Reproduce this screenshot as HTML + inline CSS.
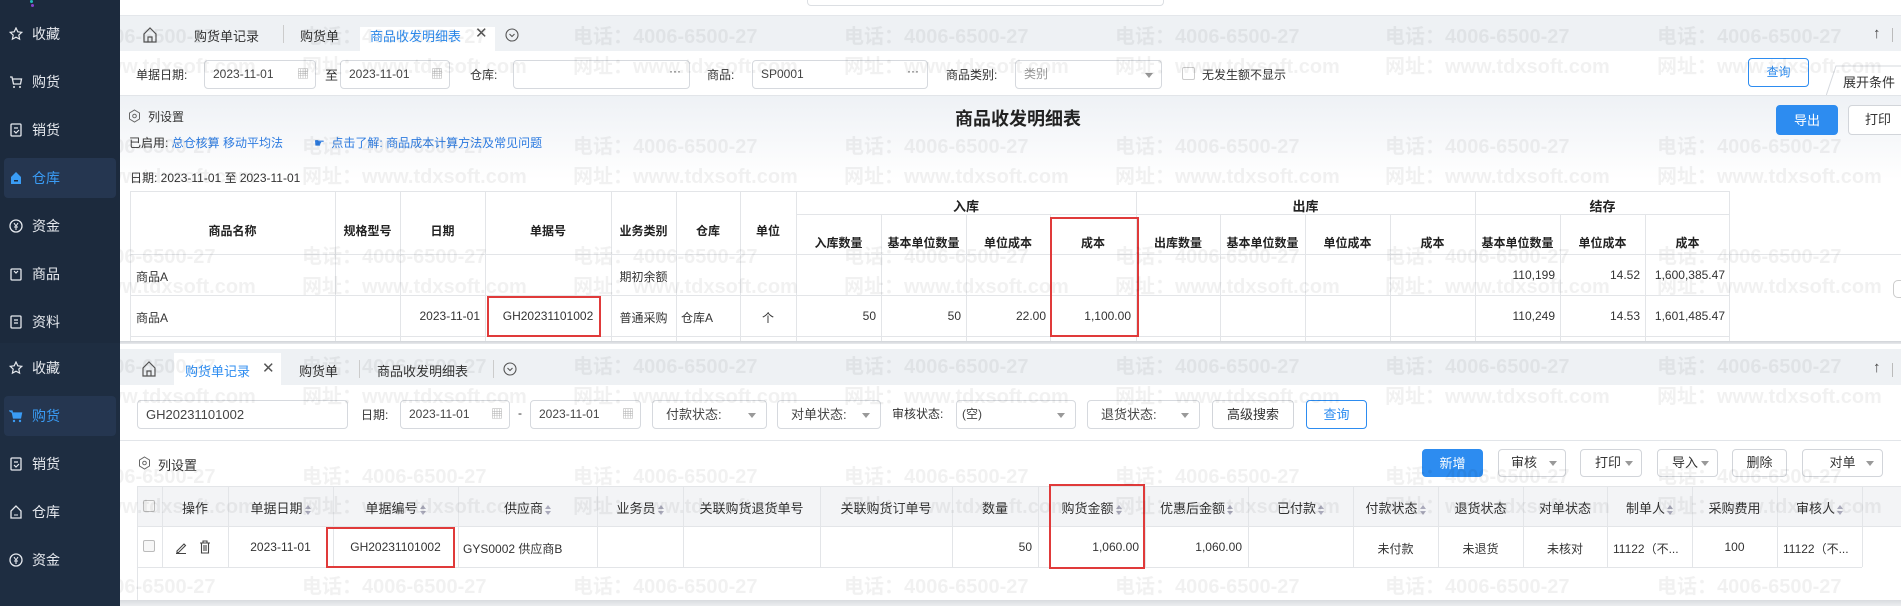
<!DOCTYPE html>
<html><head><meta charset="utf-8"><style>
*{box-sizing:border-box;margin:0;padding:0}
body{width:1901px;height:606px;overflow:hidden;position:relative;background:#fff;font-family:"Liberation Sans","Noto Sans CJK SC",sans-serif;font-size:12px;color:#333}
.a{position:absolute}
.sb{background:#1c2a3d;color:#e6e9ee;font-size:14px}
.si{position:absolute;left:0;width:120px;height:40px;line-height:40px;padding-left:32px}
.si svg{position:absolute;left:9px;top:13px}
.act{left:4px;width:112px;background:#253650;border-radius:4px;color:#3a9cf5;padding-left:28px}
.act svg{left:5px}
.tab{position:absolute;font-size:13px;color:#333;white-space:nowrap}
.inp{position:absolute;border:1px solid #d6d9de;border-radius:4px;background:#fff;height:29px;line-height:27px;padding-left:8px;color:#444;font-size:12px}
.lbl{position:absolute;font-size:12px;color:#333;white-space:nowrap}
.btn{position:absolute;border:1px solid #d2d5da;border-radius:4px;background:#fff;text-align:center;font-size:12px;color:#333}
.bb{background:#2d8cf0;border-color:#2d8cf0;color:#fff}
.bo{border-color:#2d8cf0;color:#2d8cf0}
.vl{position:absolute;width:1px;background:#e3e5e8}
.hl{position:absolute;height:1px;background:#e3e5e8}
.c{position:absolute;text-align:center;white-space:nowrap}
.r{position:absolute;text-align:right;white-space:nowrap}
.hb{font-weight:bold;color:#222}
.red{position:absolute;border:2px solid #e03a3a}
.wm{position:absolute;font-size:20px;font-weight:bold;color:rgba(0,0,0,0.055);white-space:nowrap;pointer-events:none}
.car{display:inline-block;width:0;height:0;border-left:4px solid transparent;border-right:4px solid transparent;border-top:5px solid #999;position:absolute;top:12px}
.srt{display:inline-block;width:6px;height:10px;position:relative;vertical-align:middle;margin-left:2px}
.srt:before{content:"";position:absolute;left:0;top:0;border-left:3px solid transparent;border-right:3px solid transparent;border-bottom:4px solid #aab}
.srt:after{content:"";position:absolute;left:0;top:6px;border-left:3px solid transparent;border-right:3px solid transparent;border-top:4px solid #aab}
</style></head><body>

<div class="a sb" style="left:0;top:0;width:120px;height:343px">
 <div class="a" style="left:30px;top:0;width:3px;height:3px;background:#2bb;border-radius:2px"></div>
 <div class="a" style="left:31px;top:4px;width:3px;height:3px;background:#84c;border-radius:2px"></div>
 <div class="si" style="top:14px"><svg width="14" height="14" viewBox="0 0 14 14"><path d="M7 1l1.8 3.8 4 .5-3 2.8.8 4L7 10.2 3.4 12.1l.8-4-3-2.8 4-.5z" fill="none" stroke="#e6e9ee" stroke-width="1.2"/></svg>收藏</div>
 <div class="si" style="top:62px"><svg width="14" height="14" viewBox="0 0 14 14"><path d="M1 2h2l1.5 7h7l1-5H4" fill="none" stroke="#e6e9ee" stroke-width="1.3"/><circle cx="5" cy="12" r="1" fill="#e6e9ee"/><circle cx="11" cy="12" r="1" fill="#e6e9ee"/></svg>购货</div>
 <div class="si" style="top:110px"><svg width="14" height="14" viewBox="0 0 14 14"><rect x="2" y="1" width="10" height="12" rx="1" fill="none" stroke="#e6e9ee" stroke-width="1.3"/><path d="M5 5h4M5 8l2 2 3-3" fill="none" stroke="#e6e9ee" stroke-width="1.2"/></svg>销货</div>
 <div class="si act" style="top:158px"><svg width="14" height="14" viewBox="0 0 14 14"><path d="M7 1L2 6v7h10V6z" fill="#3a9cf5"/><rect x="5" y="9" width="4" height="1.5" fill="#1c2a3d"/></svg>仓库</div>
 <div class="si" style="top:206px"><svg width="14" height="14" viewBox="0 0 14 14"><circle cx="7" cy="7" r="6" fill="none" stroke="#e6e9ee" stroke-width="1.3"/><path d="M5 4l2 3 2-3M7 7v4M5 8h4" fill="none" stroke="#e6e9ee" stroke-width="1.1"/></svg>资金</div>
 <div class="si" style="top:254px"><svg width="14" height="14" viewBox="0 0 14 14"><rect x="2" y="2" width="10" height="11" rx="1" fill="none" stroke="#e6e9ee" stroke-width="1.3"/><path d="M5 4l2 2 2-2" fill="none" stroke="#e6e9ee" stroke-width="1.2"/></svg>商品</div>
 <div class="si" style="top:302px"><svg width="14" height="14" viewBox="0 0 14 14"><rect x="2" y="1" width="10" height="12" rx="1" fill="none" stroke="#e6e9ee" stroke-width="1.3"/><path d="M5 5h4M5 8h4" stroke="#e6e9ee" stroke-width="1.2"/></svg>资料</div>
</div>
<div class="a sb" style="left:0;top:343px;width:120px;height:263px;background:#1e2d41">
 <div class="si" style="top:5px"><svg width="14" height="14" viewBox="0 0 14 14"><path d="M7 1l1.8 3.8 4 .5-3 2.8.8 4L7 10.2 3.4 12.1l.8-4-3-2.8 4-.5z" fill="none" stroke="#e6e9ee" stroke-width="1.2"/></svg>收藏</div>
 <div class="si act" style="top:53px"><svg width="14" height="14" viewBox="0 0 14 14"><path d="M1 2h2l1.5 7h7l1-5H4z" fill="#3a9cf5" stroke="#3a9cf5" stroke-width="1.3"/><circle cx="5" cy="12" r="1.2" fill="#3a9cf5"/><circle cx="11" cy="12" r="1.2" fill="#3a9cf5"/></svg>购货</div>
 <div class="si" style="top:101px"><svg width="14" height="14" viewBox="0 0 14 14"><rect x="2" y="1" width="10" height="12" rx="1" fill="none" stroke="#e6e9ee" stroke-width="1.3"/><path d="M5 5h4M5 8l2 2 3-3" fill="none" stroke="#e6e9ee" stroke-width="1.2"/></svg>销货</div>
 <div class="si" style="top:149px"><svg width="14" height="14" viewBox="0 0 14 14"><path d="M7 1L2 6v7h10V6z" fill="none" stroke="#e6e9ee" stroke-width="1.3"/><path d="M5 10h4" stroke="#e6e9ee"/></svg>仓库</div>
 <div class="si" style="top:197px"><svg width="14" height="14" viewBox="0 0 14 14"><circle cx="7" cy="7" r="6" fill="none" stroke="#e6e9ee" stroke-width="1.3"/><path d="M5 4l2 3 2-3M7 7v4M5 8h4" fill="none" stroke="#e6e9ee" stroke-width="1.1"/></svg>资金</div>
</div>

<div class="a" style="left:807px;top:0;width:357px;height:6px;border:1px solid #dcdfe3;border-top:none;border-radius:0 0 4px 4px"></div>
<div class="a" style="left:120px;top:15px;width:1781px;height:36px;background:#eef1f4;border-top:1px solid #e4e7eb"></div>
<svg class="a" style="left:143px;top:27px" width="14" height="16" viewBox="0 0 14 16"><path d="M1 7L7 1l6 6v8H1z M5 15v-5h4v5" fill="none" stroke="#555" stroke-width="1.2"/></svg>
<div class="tab" style="left:194px;top:26px">购货单记录</div>
<div class="vl" style="left:283px;top:25px;height:18px;background:#ccc"></div>
<div class="tab" style="left:300px;top:26px">购货单</div>
<div class="a" style="left:360px;top:27px;width:135px;height:24px;background:#fff"></div>
<div class="tab" style="left:370px;top:26px;color:#2d8cf0">商品收发明细表</div>
<div class="tab" style="left:475px;top:24px;font-size:15px;color:#555">✕</div>
<svg class="a" style="left:505px;top:28px" width="14" height="14" viewBox="0 0 14 14"><circle cx="7" cy="7" r="6" fill="none" stroke="#555" stroke-width="1.1"/><path d="M4.5 6l2.5 2.5L9.5 6" fill="none" stroke="#555" stroke-width="1.1"/></svg>
<div class="tab" style="left:1873px;top:25px;font-size:15px;color:#444">↑</div>
<div class="vl" style="left:1892px;top:28px;height:14px;background:#bbb"></div>

<div class="lbl" style="left:136px;top:66px">单据日期:</div>
<div class="inp" style="left:204px;top:60px;width:112px">2023-11-01<span class="a" style="right:6px;top:0;color:#aaa">▦</span></div>
<div class="lbl" style="left:325px;top:65px;font-size:13px">至</div>
<div class="inp" style="left:340px;top:60px;width:110px">2023-11-01<span class="a" style="right:6px;top:0;color:#aaa">▦</span></div>
<div class="lbl" style="left:470px;top:66px">仓库:</div>
<div class="inp" style="left:513px;top:60px;width:177px"><span class="a" style="right:8px;top:-3px">···</span></div>
<div class="lbl" style="left:707px;top:66px">商品:</div>
<div class="inp" style="left:752px;top:60px;width:176px">SP0001<span class="a" style="right:8px;top:-3px">···</span></div>
<div class="lbl" style="left:946px;top:66px">商品类别:</div>
<div class="inp" style="left:1015px;top:60px;width:147px;color:#999">类别<span class="car" style="right:8px"></span></div>
<div class="a" style="left:1182px;top:67px;width:13px;height:13px;border:1px solid #ccc;border-radius:2px;background:#fff"></div>
<div class="lbl" style="left:1202px;top:66px">无发生额不显示</div>
<div class="btn bo" style="left:1748px;top:58px;width:61px;height:29px;line-height:27px">查询</div>
<svg class="a" style="left:1826px;top:65px" width="76" height="31"><path d="M0 31L10 1H76" fill="#fff" stroke="#d6d9de"/></svg>
<div class="lbl" style="left:1843px;top:72px;font-size:13px">展开条件</div>

<div class="a" style="left:120px;top:95px;width:1781px;height:248px;background:linear-gradient(#eef1f5 0,#fff 85px)"></div>
<div class="hl" style="left:120px;top:95px;width:1781px;background:#e2e5e9"></div>
<svg class="a" style="left:128px;top:109px" width="13" height="14" viewBox="0 0 13 14"><path d="M6.5 1l5 3v6l-5 3-5-3V4z" fill="none" stroke="#666"/><circle cx="6.5" cy="7" r="1.8" fill="none" stroke="#666"/></svg>
<div class="lbl" style="left:148px;top:108px">列设置</div>
<div class="a hb" style="left:955px;top:105px;font-size:18px">商品收发明细表</div>
<div class="btn bb" style="left:1776px;top:105px;width:62px;height:30px;line-height:30px;font-size:13px">导出</div>
<div class="btn" style="left:1848px;top:105px;width:60px;height:30px;line-height:28px;font-size:13px">打印</div>
<div class="lbl" style="left:129px;top:134px">已启用: <span style="color:#2d7be0">总仓核算 移动平均法</span></div>
<div class="lbl" style="left:314px;top:134px;color:#2d7be0">☛ &nbsp;点击了解: 商品成本计算方法及常见问题</div>
<div class="lbl" style="left:130px;top:169px">日期: 2023-11-01 至 2023-11-01</div>

<div class="a" style="left:130px;top:191px;width:1600px;height:152px;background:#fff;border:1px solid #e3e5e8;border-bottom:none"></div>
<div class="hl" style="left:796px;top:214px;width:934px"></div>
<div class="hl" style="left:130px;top:254px;width:1771px"></div>
<div class="hl" style="left:130px;top:295px;width:1600px"></div>
<div class="hl" style="left:130px;top:336px;width:1600px"></div>
<div class="vl" style="left:335px;top:191px;height:152px"></div>
<div class="vl" style="left:400px;top:191px;height:152px"></div>
<div class="vl" style="left:485px;top:191px;height:152px"></div>
<div class="vl" style="left:611px;top:191px;height:152px"></div>
<div class="vl" style="left:676px;top:191px;height:152px"></div>
<div class="vl" style="left:740px;top:191px;height:152px"></div>
<div class="vl" style="left:796px;top:191px;height:152px"></div>
<div class="vl" style="left:1136px;top:191px;height:152px"></div>
<div class="vl" style="left:1475px;top:191px;height:152px"></div>
<div class="vl" style="left:881px;top:214px;height:129px"></div>
<div class="vl" style="left:966px;top:214px;height:129px"></div>
<div class="vl" style="left:1050px;top:214px;height:129px"></div>
<div class="vl" style="left:1220px;top:214px;height:129px"></div>
<div class="vl" style="left:1305px;top:214px;height:129px"></div>
<div class="vl" style="left:1390px;top:214px;height:129px"></div>
<div class="vl" style="left:1560px;top:214px;height:129px"></div>
<div class="vl" style="left:1645px;top:214px;height:129px"></div>

<div class="c hb" style="left:130px;width:205px;top:222px">商品名称</div>
<div class="c hb" style="left:335px;width:65px;top:222px">规格型号</div>
<div class="c hb" style="left:400px;width:85px;top:222px">日期</div>
<div class="c hb" style="left:485px;width:126px;top:222px">单据号</div>
<div class="c hb" style="left:611px;width:65px;top:222px">业务类别</div>
<div class="c hb" style="left:676px;width:64px;top:222px">仓库</div>
<div class="c hb" style="left:740px;width:56px;top:222px">单位</div>
<div class="c hb" style="left:796px;width:340px;top:196px;font-size:13px">入库</div>
<div class="c hb" style="left:1136px;width:339px;top:196px;font-size:13px">出库</div>
<div class="c hb" style="left:1475px;width:255px;top:196px;font-size:13px">结存</div>
<div class="c hb" style="left:796px;width:85px;top:234px">入库数量</div>
<div class="c hb" style="left:881px;width:85px;top:234px">基本单位数量</div>
<div class="c hb" style="left:966px;width:84px;top:234px">单位成本</div>
<div class="c hb" style="left:1050px;width:86px;top:234px">成本</div>
<div class="c hb" style="left:1136px;width:84px;top:234px">出库数量</div>
<div class="c hb" style="left:1220px;width:85px;top:234px">基本单位数量</div>
<div class="c hb" style="left:1305px;width:85px;top:234px">单位成本</div>
<div class="c hb" style="left:1390px;width:85px;top:234px">成本</div>
<div class="c hb" style="left:1475px;width:85px;top:234px">基本单位数量</div>
<div class="c hb" style="left:1560px;width:85px;top:234px">单位成本</div>
<div class="c hb" style="left:1645px;width:85px;top:234px">成本</div>

<div class="lbl" style="left:136px;top:268px">商品A</div>
<div class="c" style="left:611px;width:65px;top:268px">期初余额</div>
<div class="r" style="left:1475px;width:80px;top:268px">110,199</div>
<div class="r" style="left:1560px;width:80px;top:268px">14.52</div>
<div class="r" style="left:1645px;width:80px;top:268px">1,600,385.47</div>
<div class="lbl" style="left:136px;top:309px">商品A</div>
<div class="r" style="left:400px;width:80px;top:309px">2023-11-01</div>
<div class="c" style="left:485px;width:126px;top:309px">GH20231101002</div>
<div class="c" style="left:611px;width:65px;top:309px">普通采购</div>
<div class="lbl" style="left:681px;top:309px">仓库A</div>
<div class="c" style="left:740px;width:56px;top:309px">个</div>
<div class="r" style="left:796px;width:80px;top:309px">50</div>
<div class="r" style="left:881px;width:80px;top:309px">50</div>
<div class="r" style="left:966px;width:80px;top:309px">22.00</div>
<div class="r" style="left:1050px;width:81px;top:309px">1,100.00</div>
<div class="r" style="left:1475px;width:80px;top:309px">110,249</div>
<div class="r" style="left:1560px;width:80px;top:309px">14.53</div>
<div class="r" style="left:1645px;width:80px;top:309px">1,601,485.47</div>
<div class="red" style="left:487px;top:296px;width:114px;height:41px"></div>
<div class="red" style="left:1050px;top:217px;width:89px;height:120px"></div>
<div class="a" style="left:1893px;top:280px;width:10px;height:18px;border:1px solid #ccc;border-radius:5px 0 0 5px;background:#fff"></div>

<div class="a" style="left:120px;top:341px;width:1781px;height:3px;background:linear-gradient(#d0d3d8,#e8eaed)"></div>
<div class="a" style="left:120px;top:344px;width:1781px;height:257px;background:#fff"></div>
<div class="a" style="left:120px;top:349px;width:1781px;height:36px;background:#eef1f4"></div>
<svg class="a" style="left:142px;top:361px" width="14" height="16" viewBox="0 0 14 16"><path d="M1 7L7 1l6 6v8H1z M5 15v-5h4v5" fill="none" stroke="#555" stroke-width="1.2"/></svg>
<div class="a" style="left:174px;top:353px;width:107px;height:32px;background:#fff"></div>
<div class="tab" style="left:185px;top:361px;color:#2d8cf0">购货单记录</div>
<div class="tab" style="left:262px;top:359px;font-size:15px;color:#555">✕</div>
<div class="tab" style="left:299px;top:361px">购货单</div>
<div class="vl" style="left:359px;top:360px;height:18px;background:#ccc"></div>
<div class="tab" style="left:377px;top:361px">商品收发明细表</div>
<div class="vl" style="left:493px;top:360px;height:18px;background:#ccc"></div>
<svg class="a" style="left:503px;top:362px" width="14" height="14" viewBox="0 0 14 14"><circle cx="7" cy="7" r="6" fill="none" stroke="#555" stroke-width="1.1"/><path d="M4.5 6l2.5 2.5L9.5 6" fill="none" stroke="#555" stroke-width="1.1"/></svg>
<div class="tab" style="left:1873px;top:359px;font-size:15px;color:#444">↑</div>
<div class="vl" style="left:1892px;top:363px;height:14px;background:#bbb"></div>

<div class="inp" style="left:137px;top:400px;width:211px;font-size:13px">GH20231101002</div>
<div class="lbl" style="left:361px;top:406px">日期:</div>
<div class="inp" style="left:400px;top:400px;width:110px">2023-11-01<span class="a" style="right:6px;top:0;color:#aaa">▦</span></div>
<div class="lbl" style="left:518px;top:406px">-</div>
<div class="inp" style="left:530px;top:400px;width:111px">2023-11-01<span class="a" style="right:6px;top:0;color:#aaa">▦</span></div>
<div class="inp" style="left:652px;top:400px;width:115px;padding-left:13px;font-size:13px">付款状态:<span class="car" style="right:10px"></span></div>
<div class="inp" style="left:777px;top:400px;width:104px;padding-left:13px;font-size:13px">对单状态:<span class="car" style="right:10px"></span></div>
<div class="lbl" style="left:892px;top:405px">审核状态:</div>
<div class="inp" style="left:956px;top:400px;width:120px;padding-left:5px">(空)<span class="car" style="right:10px"></span></div>
<div class="inp" style="left:1087px;top:400px;width:113px;padding-left:13px;font-size:13px">退货状态:<span class="car" style="right:10px"></span></div>
<div class="btn" style="left:1212px;top:400px;width:82px;height:29px;line-height:27px;font-size:13px">高级搜索</div>
<div class="btn bo" style="left:1306px;top:400px;width:61px;height:29px;line-height:27px;font-size:13px">查询</div>
<div class="hl" style="left:120px;top:440px;width:1781px;background:#e2e5e9"></div>

<svg class="a" style="left:138px;top:456px" width="13" height="14" viewBox="0 0 13 14"><path d="M6.5 1l5 3v6l-5 3-5-3V4z" fill="none" stroke="#666"/><circle cx="6.5" cy="7" r="1.8" fill="none" stroke="#666"/></svg>
<div class="lbl" style="left:158px;top:455px;font-size:13px">列设置</div>
<div class="btn bb" style="left:1422px;top:449px;width:61px;height:28px;line-height:28px;font-size:13px">新增</div>
<div class="btn" style="left:1498px;top:449px;width:68px;height:28px;line-height:26px;text-align:left;padding-left:12px;font-size:13px">审核<span class="car" style="right:8px;top:11px"></span></div>
<div class="btn" style="left:1580px;top:449px;width:62px;height:28px;line-height:26px;text-align:left;padding-left:14px;font-size:13px">打印<span class="car" style="right:8px;top:11px"></span></div>
<div class="btn" style="left:1657px;top:449px;width:61px;height:28px;line-height:26px;text-align:left;padding-left:14px;font-size:13px">导入<span class="car" style="right:8px;top:11px"></span></div>
<div class="btn" style="left:1732px;top:449px;width:55px;height:28px;line-height:26px;font-size:13px">删除</div>
<div class="btn" style="left:1802px;top:449px;width:81px;height:28px;line-height:26px;font-size:13px">对单<span class="car" style="right:8px;top:11px"></span></div>

<div class="a" style="left:137px;top:486px;width:1764px;height:41px;background:#f3f4f6;border-top:1px solid #e3e5e8;border-bottom:1px solid #e3e5e8"></div>
<div class="hl" style="left:137px;top:567px;width:1725px"></div>
<div class="vl" style="left:137px;top:486px;height:115px"></div>
<div class="vl" style="left:162px;top:486px;height:81px"></div>
<div class="vl" style="left:228px;top:486px;height:81px"></div>
<div class="vl" style="left:333px;top:486px;height:81px"></div>
<div class="vl" style="left:458px;top:486px;height:81px"></div>
<div class="vl" style="left:597px;top:486px;height:81px"></div>
<div class="vl" style="left:683px;top:486px;height:81px"></div>
<div class="vl" style="left:820px;top:486px;height:81px"></div>
<div class="vl" style="left:952px;top:486px;height:81px"></div>
<div class="vl" style="left:1038px;top:486px;height:81px"></div>
<div class="vl" style="left:1145px;top:486px;height:81px"></div>
<div class="vl" style="left:1248px;top:486px;height:81px"></div>
<div class="vl" style="left:1353px;top:486px;height:81px"></div>
<div class="vl" style="left:1438px;top:486px;height:81px"></div>
<div class="vl" style="left:1523px;top:486px;height:81px"></div>
<div class="vl" style="left:1607px;top:486px;height:81px"></div>
<div class="vl" style="left:1692px;top:486px;height:81px"></div>
<div class="vl" style="left:1777px;top:486px;height:81px"></div>
<div class="vl" style="left:1862px;top:486px;height:81px"></div>

<div class="a" style="left:143px;top:500px;width:12px;height:12px;border:1px solid #bbb;border-radius:2px;background:#f7f7f7"></div>
<div class="c" style="left:162px;width:66px;top:498px;font-size:13px">操作</div>
<div class="c" style="left:228px;width:105px;top:498px;font-size:13px">单据日期<span class="srt"></span></div>
<div class="c" style="left:333px;width:125px;top:498px;font-size:13px">单据编号<span class="srt"></span></div>
<div class="c" style="left:458px;width:139px;top:498px;font-size:13px">供应商<span class="srt"></span></div>
<div class="c" style="left:597px;width:86px;top:498px;font-size:13px">业务员<span class="srt"></span></div>
<div class="c" style="left:683px;width:137px;top:498px;font-size:13px">关联购货退货单号</div>
<div class="c" style="left:820px;width:132px;top:498px;font-size:13px">关联购货订单号</div>
<div class="c" style="left:952px;width:86px;top:498px;font-size:13px">数量</div>
<div class="c" style="left:1038px;width:107px;top:498px;font-size:13px">购货金额<span class="srt"></span></div>
<div class="c" style="left:1145px;width:103px;top:498px;font-size:13px">优惠后金额<span class="srt"></span></div>
<div class="c" style="left:1248px;width:105px;top:498px;font-size:13px">已付款<span class="srt"></span></div>
<div class="c" style="left:1353px;width:85px;top:498px;font-size:13px">付款状态<span class="srt"></span></div>
<div class="c" style="left:1438px;width:85px;top:498px;font-size:13px">退货状态</div>
<div class="c" style="left:1523px;width:84px;top:498px;font-size:13px">对单状态</div>
<div class="c" style="left:1607px;width:85px;top:498px;font-size:13px">制单人<span class="srt"></span></div>
<div class="c" style="left:1692px;width:85px;top:498px;font-size:13px">采购费用</div>
<div class="c" style="left:1777px;width:85px;top:498px;font-size:13px">审核人<span class="srt"></span></div>

<div class="a" style="left:143px;top:540px;width:12px;height:12px;border:1px solid #bbb;border-radius:2px;background:#f7f7f7"></div>
<svg class="a" style="left:175px;top:541px" width="12" height="13" viewBox="0 0 12 13"><path d="M2 10L9 3l1.5 1.5-7 7H2z M1 12.5h10" fill="none" stroke="#444" stroke-width="1.1"/></svg>
<svg class="a" style="left:199px;top:540px" width="12" height="14" viewBox="0 0 12 14"><path d="M1 3h10M4 3V1h4v2M2.5 3v10h7V3M5 5v6M7 5v6" fill="none" stroke="#444" stroke-width="1.1"/></svg>
<div class="c" style="left:228px;width:105px;top:540px">2023-11-01</div>
<div class="c" style="left:333px;width:125px;top:540px">GH20231101002</div>
<div class="lbl" style="left:463px;top:540px">GYS0002 供应商B</div>
<div class="r" style="left:952px;width:80px;top:540px">50</div>
<div class="r" style="left:1038px;width:101px;top:540px">1,060.00</div>
<div class="r" style="left:1145px;width:97px;top:540px">1,060.00</div>
<div class="c" style="left:1353px;width:85px;top:540px">未付款</div>
<div class="c" style="left:1438px;width:85px;top:540px">未退货</div>
<div class="c" style="left:1523px;width:84px;top:540px">未核对</div>
<div class="lbl" style="left:1613px;top:540px">11122（不...</div>
<div class="c" style="left:1692px;width:85px;top:540px">100</div>
<div class="lbl" style="left:1783px;top:540px">11122（不...</div>
<div class="red" style="left:326px;top:527px;width:129px;height:41px"></div>
<div class="red" style="left:1049px;top:484px;width:96px;height:85px"></div>
<div class="a" style="left:120px;top:600px;width:1781px;height:6px;background:linear-gradient(#d8dbdf,#eceef0)"></div>

<div class="a" style="left:120px;top:0;width:1781px;height:606px;overflow:hidden;pointer-events:none">
<div class="wm" style="left:-89px;top:20px">电话：4006-6500-27</div><div class="wm" style="left:-89px;top:50px">网址：www.tdxsoft.com</div>
<div class="wm" style="left:182px;top:20px">电话：4006-6500-27</div><div class="wm" style="left:182px;top:50px">网址：www.tdxsoft.com</div>
<div class="wm" style="left:453px;top:20px">电话：4006-6500-27</div><div class="wm" style="left:453px;top:50px">网址：www.tdxsoft.com</div>
<div class="wm" style="left:724px;top:20px">电话：4006-6500-27</div><div class="wm" style="left:724px;top:50px">网址：www.tdxsoft.com</div>
<div class="wm" style="left:995px;top:20px">电话：4006-6500-27</div><div class="wm" style="left:995px;top:50px">网址：www.tdxsoft.com</div>
<div class="wm" style="left:1265px;top:20px">电话：4006-6500-27</div><div class="wm" style="left:1265px;top:50px">网址：www.tdxsoft.com</div>
<div class="wm" style="left:1537px;top:20px">电话：4006-6500-27</div><div class="wm" style="left:1537px;top:50px">网址：www.tdxsoft.com</div>
</div>
<div class="a" style="left:120px;top:110px;width:1781px;height:496px;overflow:hidden;pointer-events:none">
<div class="wm" style="left:-89px;top:20px">电话：4006-6500-27</div><div class="wm" style="left:-89px;top:50px">网址：www.tdxsoft.com</div>
<div class="wm" style="left:182px;top:20px">电话：4006-6500-27</div><div class="wm" style="left:182px;top:50px">网址：www.tdxsoft.com</div>
<div class="wm" style="left:453px;top:20px">电话：4006-6500-27</div><div class="wm" style="left:453px;top:50px">网址：www.tdxsoft.com</div>
<div class="wm" style="left:724px;top:20px">电话：4006-6500-27</div><div class="wm" style="left:724px;top:50px">网址：www.tdxsoft.com</div>
<div class="wm" style="left:995px;top:20px">电话：4006-6500-27</div><div class="wm" style="left:995px;top:50px">网址：www.tdxsoft.com</div>
<div class="wm" style="left:1265px;top:20px">电话：4006-6500-27</div><div class="wm" style="left:1265px;top:50px">网址：www.tdxsoft.com</div>
<div class="wm" style="left:1537px;top:20px">电话：4006-6500-27</div><div class="wm" style="left:1537px;top:50px">网址：www.tdxsoft.com</div>
</div>
<div class="a" style="left:120px;top:220px;width:1781px;height:386px;overflow:hidden;pointer-events:none">
<div class="wm" style="left:-89px;top:20px">电话：4006-6500-27</div><div class="wm" style="left:-89px;top:50px">网址：www.tdxsoft.com</div>
<div class="wm" style="left:182px;top:20px">电话：4006-6500-27</div><div class="wm" style="left:182px;top:50px">网址：www.tdxsoft.com</div>
<div class="wm" style="left:453px;top:20px">电话：4006-6500-27</div><div class="wm" style="left:453px;top:50px">网址：www.tdxsoft.com</div>
<div class="wm" style="left:724px;top:20px">电话：4006-6500-27</div><div class="wm" style="left:724px;top:50px">网址：www.tdxsoft.com</div>
<div class="wm" style="left:995px;top:20px">电话：4006-6500-27</div><div class="wm" style="left:995px;top:50px">网址：www.tdxsoft.com</div>
<div class="wm" style="left:1265px;top:20px">电话：4006-6500-27</div><div class="wm" style="left:1265px;top:50px">网址：www.tdxsoft.com</div>
<div class="wm" style="left:1537px;top:20px">电话：4006-6500-27</div><div class="wm" style="left:1537px;top:50px">网址：www.tdxsoft.com</div>
</div>
<div class="a" style="left:120px;top:330px;width:1781px;height:276px;overflow:hidden;pointer-events:none">
<div class="wm" style="left:-89px;top:20px">电话：4006-6500-27</div><div class="wm" style="left:-89px;top:50px">网址：www.tdxsoft.com</div>
<div class="wm" style="left:182px;top:20px">电话：4006-6500-27</div><div class="wm" style="left:182px;top:50px">网址：www.tdxsoft.com</div>
<div class="wm" style="left:453px;top:20px">电话：4006-6500-27</div><div class="wm" style="left:453px;top:50px">网址：www.tdxsoft.com</div>
<div class="wm" style="left:724px;top:20px">电话：4006-6500-27</div><div class="wm" style="left:724px;top:50px">网址：www.tdxsoft.com</div>
<div class="wm" style="left:995px;top:20px">电话：4006-6500-27</div><div class="wm" style="left:995px;top:50px">网址：www.tdxsoft.com</div>
<div class="wm" style="left:1265px;top:20px">电话：4006-6500-27</div><div class="wm" style="left:1265px;top:50px">网址：www.tdxsoft.com</div>
<div class="wm" style="left:1537px;top:20px">电话：4006-6500-27</div><div class="wm" style="left:1537px;top:50px">网址：www.tdxsoft.com</div>
</div>
<div class="a" style="left:120px;top:440px;width:1781px;height:166px;overflow:hidden;pointer-events:none">
<div class="wm" style="left:-89px;top:20px">电话：4006-6500-27</div><div class="wm" style="left:-89px;top:50px">网址：www.tdxsoft.com</div>
<div class="wm" style="left:182px;top:20px">电话：4006-6500-27</div><div class="wm" style="left:182px;top:50px">网址：www.tdxsoft.com</div>
<div class="wm" style="left:453px;top:20px">电话：4006-6500-27</div><div class="wm" style="left:453px;top:50px">网址：www.tdxsoft.com</div>
<div class="wm" style="left:724px;top:20px">电话：4006-6500-27</div><div class="wm" style="left:724px;top:50px">网址：www.tdxsoft.com</div>
<div class="wm" style="left:995px;top:20px">电话：4006-6500-27</div><div class="wm" style="left:995px;top:50px">网址：www.tdxsoft.com</div>
<div class="wm" style="left:1265px;top:20px">电话：4006-6500-27</div><div class="wm" style="left:1265px;top:50px">网址：www.tdxsoft.com</div>
<div class="wm" style="left:1537px;top:20px">电话：4006-6500-27</div><div class="wm" style="left:1537px;top:50px">网址：www.tdxsoft.com</div>
</div>
<div class="a" style="left:120px;top:550px;width:1781px;height:56px;overflow:hidden;pointer-events:none">
<div class="wm" style="left:-89px;top:20px">电话：4006-6500-27</div>
<div class="wm" style="left:182px;top:20px">电话：4006-6500-27</div>
<div class="wm" style="left:453px;top:20px">电话：4006-6500-27</div>
<div class="wm" style="left:724px;top:20px">电话：4006-6500-27</div>
<div class="wm" style="left:995px;top:20px">电话：4006-6500-27</div>
<div class="wm" style="left:1265px;top:20px">电话：4006-6500-27</div>
<div class="wm" style="left:1537px;top:20px">电话：4006-6500-27</div>
</div>
</body></html>
